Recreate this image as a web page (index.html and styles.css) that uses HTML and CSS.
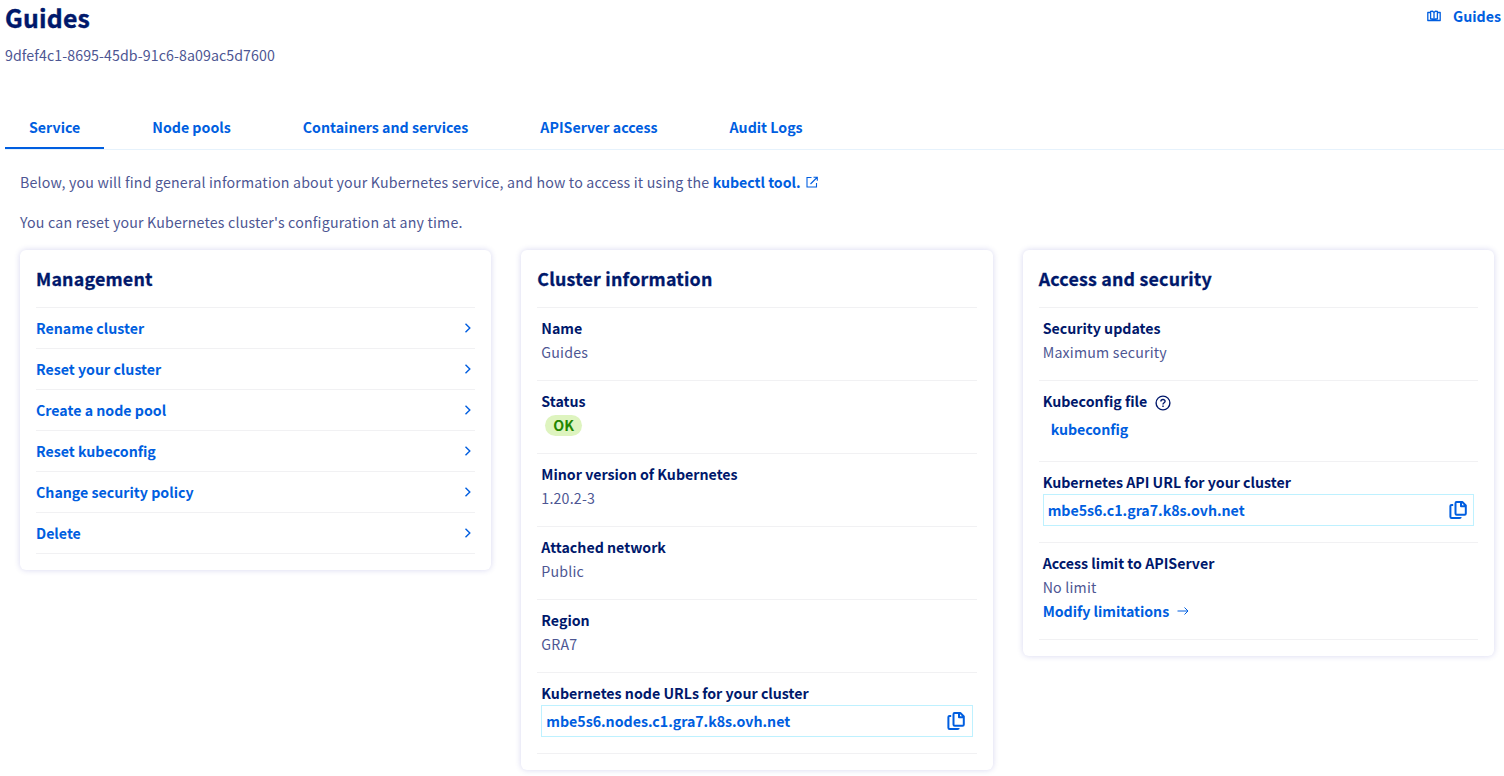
FILE: index.html
```
<!DOCTYPE html>
<html lang="en">
<head>
<meta charset="utf-8">
<title>Guides</title>
<link rel="stylesheet" href="styles.css">
</head>
<body>
<svg class="sprite" width="0" height="0" aria-hidden="true">
  <symbol id="chevron" viewBox="0 0 8 12"><path d="M1.5 1.8 5.8 6 1.5 10.200" fill="none" stroke="currentColor" stroke-width="1.4"/></symbol>
  <symbol id="copy" viewBox="0 0 18 20"><path d="M7.500 2h5.800l3.500 3.500v8.100q0 1.200-1.200 1.200h-7.900q-1.200 0-1.200-1.200V3.200q0-1.200 1-1.200zM12 2v4.200h4.600M4.200 4.900H2.600q-1.200 0-1.200 1.200v10.700q0 1.200 1.200 1.200h7.900q1.200 0 1.200-1" fill="none" stroke="currentColor" stroke-width="2" stroke-linejoin="round"/></symbol>
</svg>
<header class="header">
  <div>
    <h1 class="title">Guides</h1>
    <p class="cluster-id">9dfef4c1-8695-45db-91c6-8a09ac5d7600</p>
  </div>
  <a class="guides-link">
    <svg width="14" height="12" viewBox="0 0 14 12" fill="none" stroke="currentColor" stroke-width="1.300" stroke-linejoin="round"><path d="M3.600 2.500H.8v8h12.400v-8h-2.800M7 2.500v8M7 2.500 5.600 1.200 3.600 1.500v7.300l2 .2L7 10.500 8.400 9l2-.2V1.500l-2-.3z"/></svg>
    <span>Guides</span>
  </a>
</header>
<nav class="tabs">
  <a class="tab tab-active">Service</a>
  <a class="tab">Node pools</a>
  <a class="tab">Containers and services</a>
  <a class="tab">APIServer access</a>
  <a class="tab">Audit Logs</a>
</nav>
<main class="content">
  <p class="intro">Below, you will find general information about your Kubernetes service, and how to access it using the <a class="link">kubectl tool.</a><svg class="external" width="12" height="12" viewBox="0 0 12 12" fill="none" stroke="currentColor" stroke-width="1.1"><path d="M5.500 1.500H1v9.500h9.500V7M7.500 1.200h3.800v3.600M11 1.500 4.500 8"/></svg></p>
  <p class="intro">You can reset your Kubernetes cluster's configuration at any time.</p>
  <div class="cards">
    <section class="card">
      <h2 class="card-title">Management</h2>
      <a class="action">Rename cluster<svg width="8" height="12"><use href="#chevron"/></svg></a>
      <a class="action">Reset your cluster<svg width="8" height="12"><use href="#chevron"/></svg></a>
      <a class="action">Create a node pool<svg width="8" height="12"><use href="#chevron"/></svg></a>
      <a class="action">Reset kubeconfig<svg width="8" height="12"><use href="#chevron"/></svg></a>
      <a class="action">Change security policy<svg width="8" height="12"><use href="#chevron"/></svg></a>
      <a class="action">Delete<svg width="8" height="12"><use href="#chevron"/></svg></a>
    </section>
    <section class="card">
      <h2 class="card-title">Cluster information</h2>
      <dl class="row"><dt>Name</dt><dd>Guides</dd></dl>
      <dl class="row"><dt>Status</dt><dd class="status"><span class="badge">OK</span></dd></dl>
      <dl class="row"><dt>Minor version of Kubernetes</dt><dd>1.20.2-3</dd></dl>
      <dl class="row"><dt>Attached network</dt><dd>Public</dd></dl>
      <dl class="row"><dt>Region</dt><dd>GRA7</dd></dl>
      <dl class="row"><dt>Kubernetes node URLs for your cluster</dt><dd class="url-box"><a class="link">mbe5s6.nodes.c1.gra7.k8s.ovh.net</a><svg width="18" height="20"><use href="#copy"/></svg></dd></dl>
    </section>
    <section class="card">
      <h2 class="card-title">Access and security</h2>
      <dl class="row"><dt>Security updates</dt><dd>Maximum security</dd></dl>
      <dl class="row"><dt class="with-help">Kubeconfig file<svg class="help" width="16" height="16" viewBox="0 0 16 16" fill="none" stroke="currentColor" stroke-width="1.4"><circle cx="8" cy="8" r="6.900"/><path d="M5.900 6.500C5.900 3.800 10.100 3.900 10.100 6.300 10.100 7.800 8 7.800 8 9.500M8 10.500v1.500"/></svg></dt><dd class="download"><a class="link">kubeconfig</a></dd></dl>
      <dl class="row"><dt>Kubernetes API URL for your cluster</dt><dd class="url-box"><a class="link">mbe5s6.c1.gra7.k8s.ovh.net</a><svg width="18" height="20"><use href="#copy"/></svg></dd></dl>
      <dl class="row"><dt>Access limit to APIServer</dt><dd>No limit</dd><dd class="modify"><a class="link">Modify limitations</a><svg width="12" height="10" viewBox="0 0 12 10" fill="none" stroke="currentColor"><path d="M.5 5h10.500M7.500 1.500 11 5 7.500 8.500"/></svg></dd></dl>
    </section>
  </div>
</main>
</body>
</html>
```
FILE: styles.css
```
* { box-sizing: border-box; }
body {
  margin: 0;
  height: 776px;
  overflow: hidden;
  background: #fff;
  color: #4d5693;
  font: 14.2px/24px "Noto Sans CJK SC", "Open Sans", sans-serif;
}
h1, h2, p, dl, dd { margin: 0; }
svg { flex: none; }
.sprite { display: block; }
.header { display: flex; justify-content: space-between; height: 107px; padding: 0 3px 0 5px; }
.title { color: #00186b; font-size: 24.8px; font-weight: 700; line-height: 34px; letter-spacing: .2px; -webkit-text-stroke: .4px #00186b; }
.cluster-id { margin-top: 9px; letter-spacing: .08px; }
.guides-link { display: flex; align-items: center; gap: 12.5px; height: 32px; color: #005ee0; font-weight: 700; }
.tabs { display: flex; gap: 24px; height: 43px; margin-left: 5px; border-bottom: 1px solid #e6f2fc; }
.tab { height: 42px; padding: 8px 24px 0; color: #005ee0; font-weight: 700; white-space: nowrap; }
.tab-active { border-bottom: 2px solid #005ee0; }
.content { padding: 20px 10px 0 20px; }
.intro { height: 24px; margin-bottom: 16px; letter-spacing: .19px; white-space: nowrap; }
.link { color: #005ee0; font-weight: 700; letter-spacing: -.02px; }
.external { margin-left: 5.5px; color: #005ee0; }
.cards { display: grid; grid-template-columns: repeat(3, 1fr); gap: 30px; align-items: start; }
.card { padding: 16px; border-radius: 6px; background: #fff; box-shadow: 0 0 6px rgba(0, 0, 160, .16); }
.card-title { height: 42px; border-bottom: 1px solid #f1f1f3; color: #00186b; font-size: 17.8px; font-weight: 700; line-height: 25px; letter-spacing: .22px; -webkit-text-stroke: .3px #00186b; }
.action { display: flex; align-items: center; justify-content: space-between; height: 41px; padding-right: 3px; border-bottom: 1px solid #f1f1f3; color: #005ee0; font-weight: 700; }
.row { padding: 8px 4px 16px; border-bottom: 1px solid #f1f1f3; }
dt { color: #00186b; font-weight: 700; }
dd { letter-spacing: .2px; }
.status { display: flex; align-items: center; height: 24px; padding-left: 4px; }
.badge { height: 21px; padding: 0 8px; border-radius: 11px; background: #def4bf; color: #228600; font-weight: 700; line-height: 21px; letter-spacing: 0; }
.url-box { display: flex; align-items: center; justify-content: space-between; height: 32px; padding: 0 6.5px 0 4px; border: 1px solid #bef1ff; color: #005ee0; }
.with-help { display: flex; align-items: center; gap: 7.5px; }
.help { margin-top: 3px; }
.download { height: 32px; padding: 4px 8px; }
.modify { display: flex; align-items: center; gap: 8px; color: #005ee0; }
```
